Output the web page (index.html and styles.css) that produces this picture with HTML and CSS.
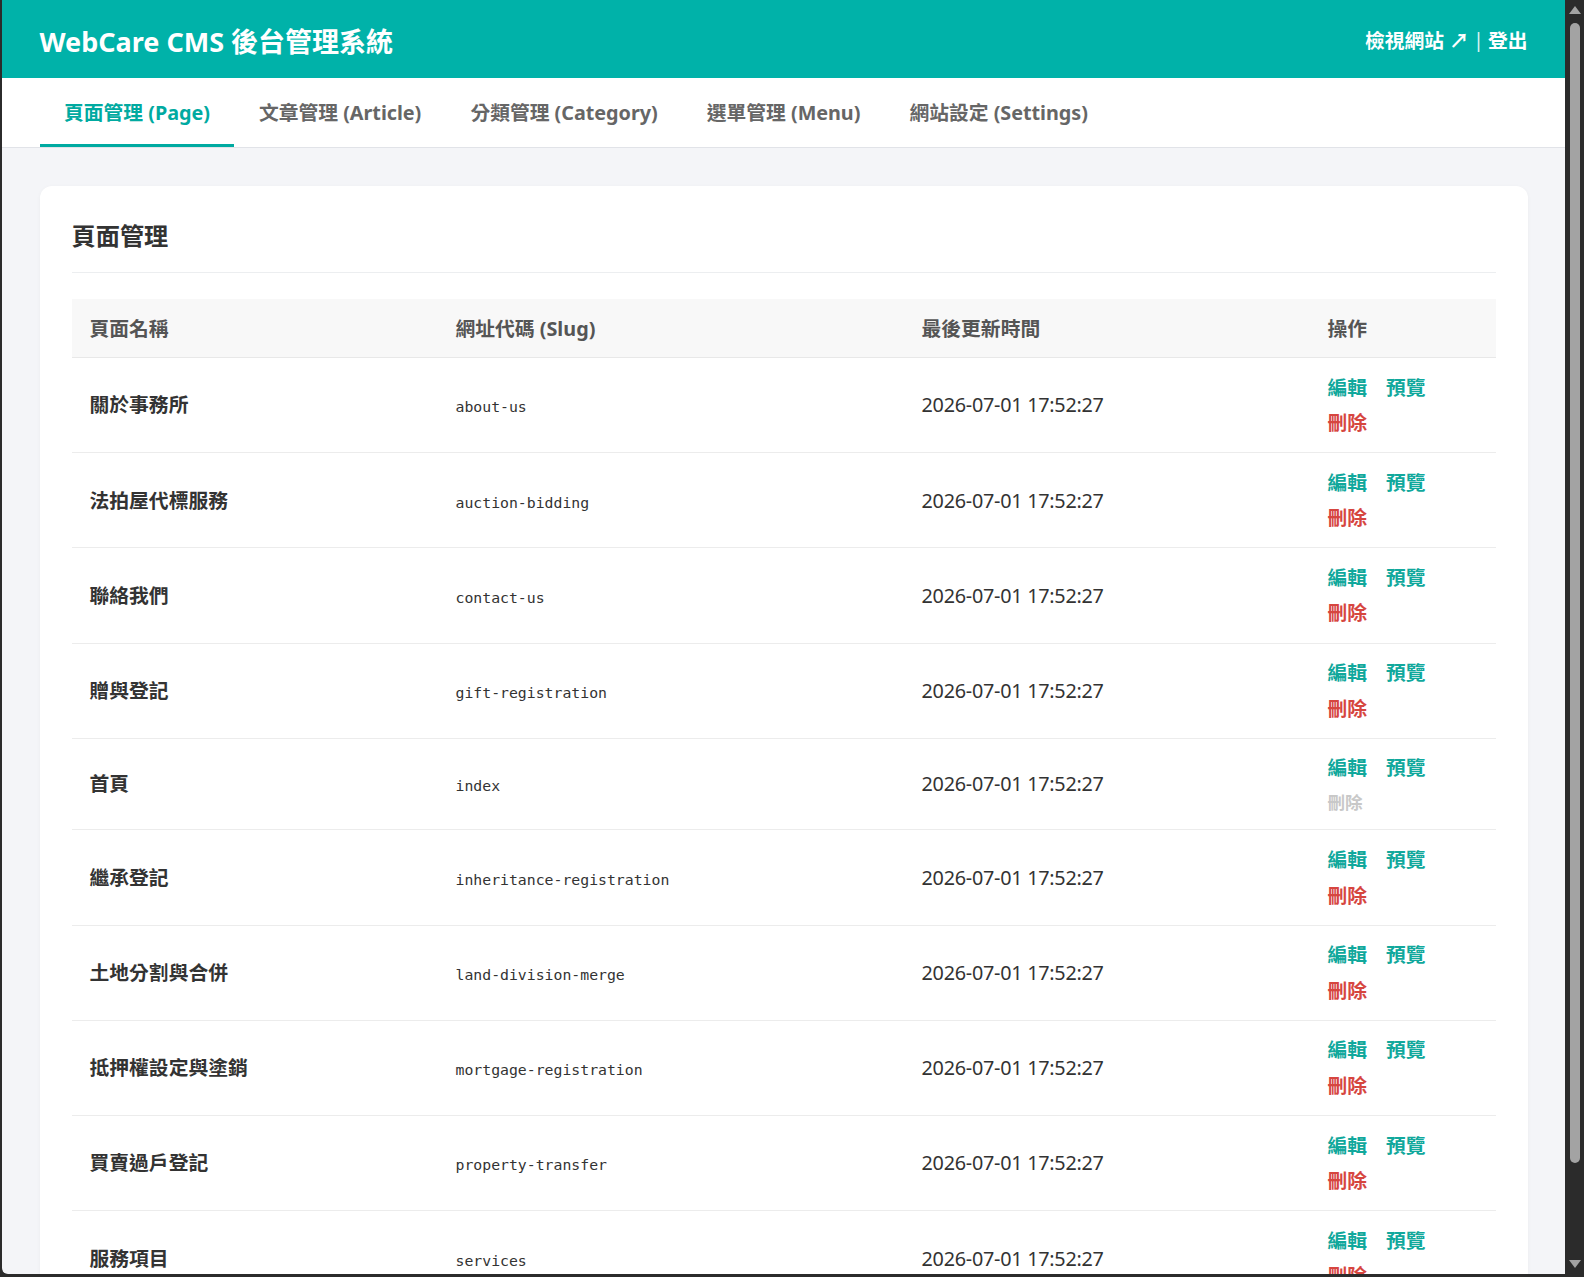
FILE: index.html
```html
<!DOCTYPE html>
<html lang="zh-Hant">
<head>
<meta charset="utf-8">
<title>WebCare CMS 後台管理系統</title>
<link rel="stylesheet" href="styles.css">
</head>
<body>
<div class="window">
  <div class="viewport">
    <header class="topbar">
      <div class="container topbar-inner">
        <div class="brand">WebCare CMS 後台管理系統</div>
        <div class="top-links">
          <a class="top-link" href="#">檢視網站 ↗</a>
          <span class="sep">|</span>
          <a class="top-link" href="#">登出</a>
        </div>
      </div>
    </header>
    <nav class="tabs">
      <div class="container tabs-inner">
        <a class="tab active" href="#">頁面管理 (Page)</a>
        <a class="tab" href="#">文章管理 (Article)</a>
        <a class="tab" href="#">分類管理 (Category)</a>
        <a class="tab" href="#">選單管理 (Menu)</a>
        <a class="tab" href="#">網站設定 (Settings)</a>
      </div>
    </nav>
    <main class="main">
      <section class="container card">
        <h2 class="card-title">頁面管理</h2>
        <table class="table">
          <colgroup>
            <col class="c-name"><col class="c-slug"><col class="c-date"><col class="c-act">
          </colgroup>
          <thead>
            <tr><th>頁面名稱</th><th>網址代碼 (Slug)</th><th>最後更新時間</th><th>操作</th></tr>
          </thead>
          <tbody>
            <tr><td class="name">關於事務所</td><td><code class="slug">about-us</code></td><td class="date">2026-07-01 17:52:27</td>
              <td><div class="actions"><a class="act edit" href="#">編輯</a><a class="act edit" href="#">預覽</a><a class="act del" href="#">刪除</a></div></td></tr>
            <tr><td class="name">法拍屋代標服務</td><td><code class="slug">auction-bidding</code></td><td class="date">2026-07-01 17:52:27</td>
              <td><div class="actions"><a class="act edit" href="#">編輯</a><a class="act edit" href="#">預覽</a><a class="act del" href="#">刪除</a></div></td></tr>
            <tr><td class="name">聯絡我們</td><td><code class="slug">contact-us</code></td><td class="date">2026-07-01 17:52:27</td>
              <td><div class="actions"><a class="act edit" href="#">編輯</a><a class="act edit" href="#">預覽</a><a class="act del" href="#">刪除</a></div></td></tr>
            <tr><td class="name">贈與登記</td><td><code class="slug">gift-registration</code></td><td class="date">2026-07-01 17:52:27</td>
              <td><div class="actions"><a class="act edit" href="#">編輯</a><a class="act edit" href="#">預覽</a><a class="act del" href="#">刪除</a></div></td></tr>
            <tr><td class="name">首頁</td><td><code class="slug">index</code></td><td class="date">2026-07-01 17:52:27</td>
              <td><div class="actions"><a class="act edit" href="#">編輯</a><a class="act edit" href="#">預覽</a><span class="act disabled">刪除</span></div></td></tr>
            <tr><td class="name">繼承登記</td><td><code class="slug">inheritance-registration</code></td><td class="date">2026-07-01 17:52:27</td>
              <td><div class="actions"><a class="act edit" href="#">編輯</a><a class="act edit" href="#">預覽</a><a class="act del" href="#">刪除</a></div></td></tr>
            <tr><td class="name">土地分割與合併</td><td><code class="slug">land-division-merge</code></td><td class="date">2026-07-01 17:52:27</td>
              <td><div class="actions"><a class="act edit" href="#">編輯</a><a class="act edit" href="#">預覽</a><a class="act del" href="#">刪除</a></div></td></tr>
            <tr><td class="name">抵押權設定與塗銷</td><td><code class="slug">mortgage-registration</code></td><td class="date">2026-07-01 17:52:27</td>
              <td><div class="actions"><a class="act edit" href="#">編輯</a><a class="act edit" href="#">預覽</a><a class="act del" href="#">刪除</a></div></td></tr>
            <tr><td class="name">買賣過戶登記</td><td><code class="slug">property-transfer</code></td><td class="date">2026-07-01 17:52:27</td>
              <td><div class="actions"><a class="act edit" href="#">編輯</a><a class="act edit" href="#">預覽</a><a class="act del" href="#">刪除</a></div></td></tr>
            <tr><td class="name">服務項目</td><td><code class="slug">services</code></td><td class="date">2026-07-01 17:52:27</td>
              <td><div class="actions"><a class="act edit" href="#">編輯</a><a class="act edit" href="#">預覽</a><a class="act del" href="#">刪除</a></div></td></tr>
          </tbody>
        </table>
      </section>
    </main>
  </div>
  <div class="scrollbar">
    <span class="sb-arrow sb-up"></span>
    <span class="sb-thumb"></span>
    <span class="sb-space"></span>
    <span class="sb-arrow sb-down"></span>
  </div>
</div>
</body>
</html>
```

FILE: styles.css
```css
* { box-sizing: border-box; }

html, body {
  margin: 0;
  height: 1277px;
  overflow: hidden;
}

body {
  background: #2b2b2b;
  padding: 0 0 3px 2px;
  font-family: "Noto Sans", "Open Sans", "Noto Sans CJK TC", sans-serif;
  font-size: 19.8px;
  color: #333;
}

a { text-decoration: none; }

.window {
  display: flex;
  height: 1274px;
}

.viewport {
  flex: 1;
  overflow: hidden;
  background: #f4f5f8;
  border-bottom-left-radius: 6px;
}

.container {
  width: 1488px;
  margin: 0 auto;
}

/* top bar */
.topbar {
  background: #00b2a9;
  height: 78px;
}
.topbar-inner {
  height: 100%;
  display: flex;
  align-items: center;
  justify-content: space-between;
}
.brand {
  color: #fff;
  font-size: 27px;
  font-weight: 700;
  line-height: 1;
  padding-top: 4px;
}
.top-links {
  display: flex;
  align-items: center;
  gap: 4px;
  color: #fff;
  padding-top: 1px;
}
.top-link {
  color: #fff;
  font-weight: 700;
  font-size: 19.8px;
}
.sep {
  font-weight: 400;
  opacity: 0.85;
}

/* tabs */
.tabs {
  background: #fff;
  border-bottom: 1px solid #e1e3e8;
}
.tabs-inner {
  display: flex;
}
.tab {
  display: block;
  padding: 4px 24.6px 0;
  height: 69px;
  line-height: 62px;
  border-bottom: 3px solid transparent;
  color: #666;
  font-weight: 700;
  font-size: 19.8px;
  letter-spacing: -0.03px;
}
.tab.active {
  color: #00aaa1;
  border-bottom-color: #00aaa1;
}

/* main */
.main {
  padding-top: 38px;
}
.card {
  background: #fff;
  border-radius: 12px;
  padding: 32px;
  box-shadow: 0 1px 4px rgba(0, 0, 0, 0.04);
}
.card-title {
  margin: 0 0 26px;
  font-size: 24.2px;
  line-height: 36px;
  font-weight: 700;
  color: #333;
  padding-bottom: 18px;
  border-bottom: 1px solid #eceef0;
}

.table {
  width: 100%;
  border-collapse: collapse;
  table-layout: fixed;
}
.c-name { width: 366px; }
.c-slug { width: 466px; }
.c-date { width: 406px; }

.table th {
  background: #f8f8f8;
  color: #555;
  font-weight: 700;
  text-align: left;
  padding: 11.5px 18px;
  line-height: 35px;
  border-bottom: 1px solid #e8e8e8;
}
.table td {
  padding: 11.6px 18px;
  line-height: 35.5px;
  border-bottom: 1px solid #ececec;
  vertical-align: middle;
}
.name {
  font-weight: 700;
  color: #333;
}
.slug {
  font-family: "DejaVu Sans Mono", "Liberation Mono", monospace;
  font-size: 14.8px;
  color: #333;
  vertical-align: -2px;
}
.date {
  color: #333;
  letter-spacing: -0.25px;
}

.actions {
  display: flex;
  flex-wrap: wrap;
  column-gap: 19px;
}
.act {
  font-weight: 700;
  line-height: 35.5px;
}
.edit { color: #11a89c; }
.del { color: #d6463f; }
.disabled {
  color: #c8c8c8;
  font-size: 17.6px;
  line-height: 32px;
}

/* fake window scrollbar */
.scrollbar {
  width: 19px;
  background: #2b2b2b;
  display: flex;
  flex-direction: column;
  align-items: center;
  padding: 6px 0 6px 0;
}
.sb-arrow {
  width: 0;
  height: 0;
  border-left: 6px solid transparent;
  border-right: 6px solid transparent;
}
.sb-up {
  border-bottom: 8px solid #a3a3a3;
  margin-bottom: 9px;
}
.sb-down {
  border-top: 8px solid #a3a3a3;
}
.sb-thumb {
  width: 10px;
  height: 1140px;
  border-radius: 5px;
  background: #a3a3a3;
}
.sb-space {
  flex: 1;
}
```
